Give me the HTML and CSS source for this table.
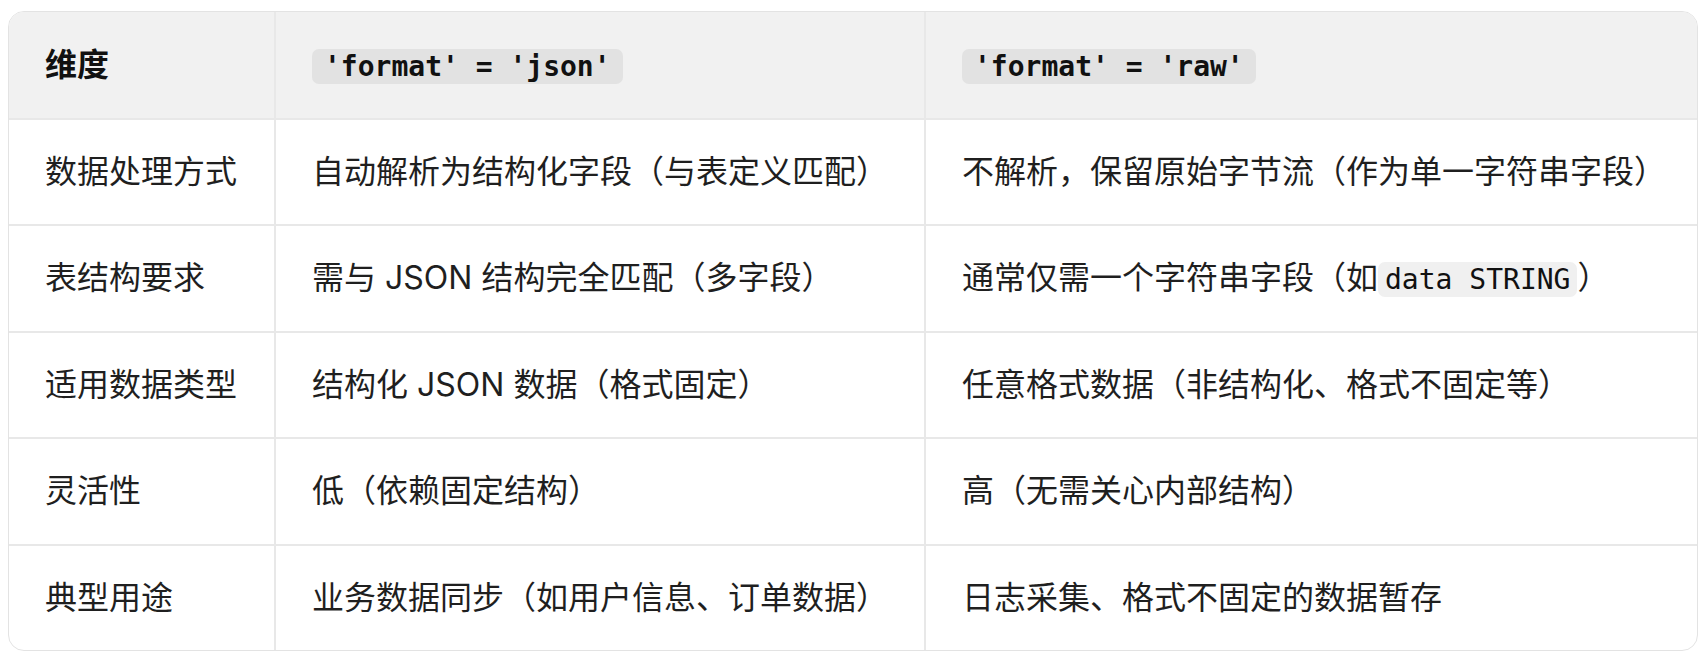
FILE: index.html
```html
<!DOCTYPE html>
<html lang="zh-CN">
<head>
<meta charset="utf-8">
<link rel="stylesheet" href="styles.css">
</head>
<body>
<div class="wrap">
  <table class="cmp">
    <colgroup>
      <col class="c1"><col class="c2"><col class="c3">
    </colgroup>
    <thead>
      <tr>
        <th>维度</th>
        <th><code class="hcode">'format' = 'json'</code></th>
        <th><code class="hcode">'format' = 'raw'</code></th>
      </tr>
    </thead>
    <tbody>
      <tr>
        <td>数据处理方式</td>
        <td>自动解析为结构化字段（与表定义匹配）</td>
        <td>不解析，保留原始字节流（作为单一字符串字段）</td>
      </tr>
      <tr>
        <td>表结构要求</td>
        <td>需与 JSON 结构完全匹配（多字段）</td>
        <td>通常仅需一个字符串字段（如<code class="bcode">data STRING</code>）</td>
      </tr>
      <tr>
        <td>适用数据类型</td>
        <td>结构化 JSON 数据（格式固定）</td>
        <td>任意格式数据（非结构化、格式不固定等）</td>
      </tr>
      <tr>
        <td>灵活性</td>
        <td>低（依赖固定结构）</td>
        <td>高（无需关心内部结构）</td>
      </tr>
      <tr>
        <td>典型用途</td>
        <td>业务数据同步（如用户信息、订单数据）</td>
        <td>日志采集、格式不固定的数据暂存</td>
      </tr>
    </tbody>
  </table>
</div>
</body>
</html>
```
FILE: styles.css
```css
html, body {
  margin: 0;
  padding: 0;
  background: #ffffff;
}
body {
  padding: 11px 2px 0 8px;
  font-family: Inter, "Noto Sans CJK SC", sans-serif;
  color: #1f1f1f;
}
.wrap {
  width: 1690px;
  border: 1px solid #e3e3e3;
  border-radius: 16px;
  overflow: hidden;
  box-sizing: border-box;
}
.cmp {
  width: 100%;
  border-collapse: collapse;
  table-layout: fixed;
  font-size: 32px;
}
.c1 { width: 266px; }
.c2 { width: 650px; }
.c3 { width: auto; }
.cmp th, .cmp td {
  text-align: left;
  padding: 28px 36px 28.4px 36px;
  height: 48px;
  line-height: 48px;
  border-left: 2px solid #e8e8e8;
  border-top: 2px solid #e8e8e8;
  vertical-align: middle;
  white-space: nowrap;
}
.cmp th:first-child, .cmp td:first-child { border-left: none; }
.cmp thead th {
  border-top: none;
  background: #f1f1f1;
  font-weight: 700;
  color: #111;
  padding-top: 29px;
  padding-bottom: 29px;
}
code {
  font-family: "DejaVu Sans Mono", "Liberation Mono", monospace;
  font-size: 28px;
  line-height: 1;
  border-radius: 7px;
  color: #111;
}
.hcode {
  background: #e2e2e2;
  padding: 1px 12px;
  font-weight: 700;
}
.bcode {
  background: #f0f0f0;
  padding: 1px 7px;
  font-weight: 400;
}
```
